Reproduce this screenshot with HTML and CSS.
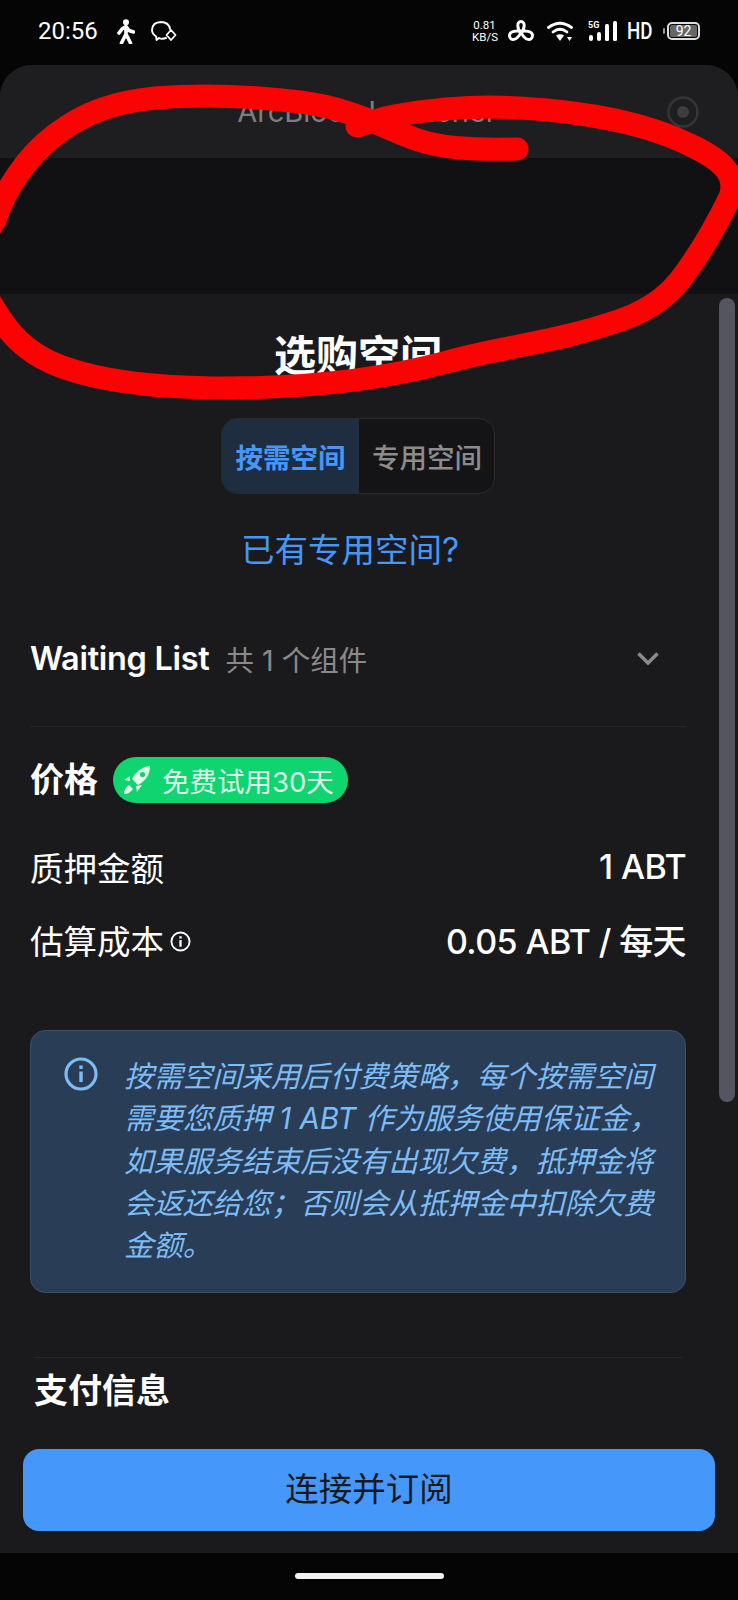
FILE: index.html
```html
<!DOCTYPE html>
<html lang="zh-CN">
<head>
<meta charset="utf-8">
<title>选购空间</title>
<link rel="stylesheet" href="styles.css">
</head>
<body>
<div class="screen">
  <header class="status">
    <div class="status-left">
      <span class="time">20:56</span>
      <svg class="ico-walk" viewBox="0 0 18 25"><circle cx="9" cy="3.2" r="3"/><path d="M9 7.500 L5 10 L2 14 M9 7.500 L12 11.500 L16.500 13 M9 8 V15 M9 15 L4.500 24 M9 15 L13.500 24" fill="none" stroke="#fff" stroke-width="3.600" stroke-linecap="round" stroke-linejoin="round"/></svg>
      <svg class="ico-chat" viewBox="0 0 26 21"><path d="M15 17 Q11 18.5 8 17 L5.5 19 L5.2 15.5 Q1 13 1 8.8 Q1.500 1.300 10 1 Q18 1.300 19 8" fill="none" stroke="#fff" stroke-width="1.900" stroke-linecap="round" stroke-linejoin="round"/><path d="M20 9 L24.500 14 L20 19 L15.500 14 Z" fill="none" stroke="#fff" stroke-width="1.800" stroke-linejoin="round"/></svg>
    </div>
    <div class="status-right">
      <span class="speed">0.81<br>KB/S</span>
      <svg class="ico-clover" viewBox="0 0 26 22"><path d="M13 12 C9 9 8.500 1.500 13 1.500 C17.500 1.500 17 9 13 12 C16 10 25 11 24.500 16 C24 21 17 21.500 13 12 C9 21.500 2 21 1.500 16 C1 11 10 10 13 12 Z" fill="none" stroke="#fff" stroke-width="2.900" stroke-linejoin="round"/></svg>
      <svg class="ico-wifi" viewBox="0 0 26 21"><g fill="none" stroke="#fff" stroke-width="2.800" stroke-linecap="round"><path d="M1.500 6.500 Q13 -2 24.500 6.500"/><path d="M6 11 Q13 5.500 20 11"/></g><path d="M9 14.500 Q13 12 17 14.500 L13 20 Z M20 16 h5 l-2.500 4 Z" fill="#fff"/></svg>
      <svg class="ico-signal" viewBox="0 0 28 20"><g fill="#fff"><rect x="0" y="14" width="4" height="6" rx="2"/><rect x="8" y="11" width="4" height="9" rx="2"/><rect x="16" y="3" width="4" height="17" rx="1.500"/><rect x="24" y="0" width="4" height="20" rx="1.500"/></g></svg>
      <span class="sig-label">5G</span>
      <span class="hd">HD</span>
      <span class="battery"><span class="battery-fill">92</span></span>
    </div>
  </header>

  <main class="sheet">
    <div class="app-head">
      <span></span>
      <span class="app-name">ArcBlock Launcher</span>
      <svg class="app-dot" viewBox="0 0 32 32"><circle cx="16" cy="16" r="14.500" fill="none" stroke="#353538" stroke-width="2.500"/><circle cx="16" cy="16" r="6" fill="#3d3d40"/></svg>
    </div>
    <div class="band"></div>

    <div class="scroll">
      <h1 class="title">选购空间</h1>
      <div class="tabs-wrap">
        <div class="tabs">
          <span class="tab tab-on">按需空间</span>
          <span class="tab">专用空间</span>
        </div>
      </div>
      <a class="link">已有专用空间?</a>

      <div class="list-row">
        <span class="list-name">Waiting List</span>
        <span class="list-count">共 1 个组件</span>
        <svg class="chev" viewBox="0 0 24 15"><path d="M2.500 2.500 L12 12 L21.500 2.500" fill="none" stroke="#8a8a8c" stroke-width="3.600"/></svg>
      </div>
      <div class="rule"></div>

      <div class="price-head">
        <span class="h2">价格</span>
        <span class="badge">
          <svg class="rocket" viewBox="0 0 28 30"><path d="M27 1 C19 2 13 6 9 14 L15 20 C23 16 27 9 27 1 Z" fill="#e4f8ec"/><circle cx="19.500" cy="9.500" r="2.600" fill="#10d46f"/><path d="M7 11 L1 15 L7 16 Z M19 20 L14 27 L13 21 Z M6 20 C3 22 1 25 1 29 C5 29 8 27 10 24 Z" fill="#e4f8ec"/></svg>
          免费试用30天
        </span>
      </div>
      <div class="kv kv-first">
        <span>质押金额</span>
        <span class="val">1 ABT</span>
      </div>
      <div class="kv kv-second">
        <span class="kv-label">估算成本
          <svg class="mini-info" viewBox="0 0 22 22"><circle cx="11" cy="11" r="9.500" fill="none" stroke="#fff" stroke-width="2"/><rect x="9.800" y="9.500" width="2.400" height="7" fill="#fff"/><rect x="9.800" y="5.500" width="2.400" height="2.400" fill="#fff"/></svg>
        </span>
        <span class="val">0.05 ABT / 每天</span>
      </div>

      <div class="notice">
        <svg class="notice-ico" viewBox="0 0 34 34"><circle cx="17" cy="17" r="15" fill="none" stroke="#7dbcf5" stroke-width="3.200"/><rect x="15.300" y="14.500" width="3.400" height="10.500" fill="#7dbcf5"/><rect x="15.300" y="8.500" width="3.400" height="3.400" fill="#7dbcf5"/></svg>
        <p class="notice-text">按需空间采用后付费策略，每个按需空间<br>需要您质押 1 ABT 作为服务使用保证金，<br>如果服务结束后没有出现欠费，抵押金将<br>会返还给您；否则会从抵押金中扣除欠费<br>金额。</p>
      </div>

      <div class="rule rule-pay"></div>
      <div class="h2 pay-title">支付信息</div>
    </div>

    <div class="foot">
      <button class="cta">连接并订阅</button>
    </div>
    <div class="thumb"></div>
  </main>

  <footer class="navbar"><span class="home"></span></footer>

  <svg class="scribble" viewBox="0 0 738 1600"><path d="M517 149 C470 150 440 148 415 139 C385 128 350 108 300 102 C250 96 200 94 155 98 C115 102 85 112 55 135 C25 158 5 190 -5 220 C-25 250 -25 280 -5 310 C10 335 25 350 50 362 C90 380 150 388 226 388 C300 388 380 380 447 362 C490 350 530 345 570 335 C620 322 655 312 680 280 C697 258 714 230 730 197 C738 175 722 160 690 145 C650 125 590 112 520 108 C470 105 420 110 385 118 L357 126" fill="none" stroke="#fc0303" stroke-width="23" stroke-linecap="round" stroke-linejoin="round"/></svg>
</div>
</body>
</html>
```

FILE: styles.css
```css
* { box-sizing: border-box; }
html, body { margin: 0; padding: 0; background: #050505; }
body { font-family: Inter, "Noto Sans CJK SC", sans-serif; color: #fff; }
.screen { position: relative; width: 738px; height: 1600px; display: flex; flex-direction: column; overflow: hidden; background: #050505; }

.status { height: 65px; flex: none; display: flex; justify-content: space-between; align-items: flex-start; padding: 0 38px; }
.status-left, .status-right { display: flex; align-items: center; height: 62px; }
.time { font: 400 24px/1 Roboto, sans-serif; width: 60px; white-space: nowrap; }
.ico-walk { width: 18px; height: 25px; margin-left: 19px; fill: #fff; }
.ico-chat { width: 26px; height: 21px; margin-left: 16px; }
.status-right { position: relative; }
.speed { font: 400 11.500px/12px Roboto, sans-serif; text-align: center; width: 25px; white-space: nowrap; }
.ico-clover { width: 26px; height: 22px; margin-left: 11px; }
.ico-wifi { width: 26px; height: 21px; margin-left: 13px; }
.ico-signal { width: 28px; height: 20px; margin-left: 16px; }
.sig-label { position: absolute; left: 116px; top: 21px; font: 700 9px/1 Roboto, sans-serif; }
.hd { font: 500 24px/1 Roboto, sans-serif; margin-left: 10px; width: 23px; transform: scaleX(0.78); transform-origin: left center; }
.battery { position: relative; width: 33px; height: 18px; margin-left: 17px; border: 2px solid #ddd; border-radius: 5px; padding: 1px; display: flex; }
.battery::before { content: ""; position: absolute; left: -6px; top: 4px; width: 2px; height: 6px; background: #999; border-radius: 1px; }
.battery-fill { flex: 1; background: #666; border-radius: 2px; font: 400 14px/12px Roboto, sans-serif; text-align: center; color: #fff; }

.sheet { position: relative; flex: 1; min-height: 0; display: flex; flex-direction: column; background: #1a1a1c; border-radius: 32px 32px 0 0; overflow: hidden; }
.app-head { height: 93px; flex: none; background: #1e1e20; display: grid; grid-template-columns: 1fr auto 1fr; align-items: center; }
.app-name { font-size: 29px; line-height: 34px; color: #7d7d7f; margin-left: -4px; white-space: nowrap; }
.app-dot { width: 32px; height: 32px; justify-self: end; margin-right: 39px; }
.band { height: 136px; flex: none; background: #111113; }

.scroll { flex: 1; min-height: 0; overflow: hidden; padding: 0 52px 0 30px; }
.title { margin: 37px 0 0; font-size: 42px; line-height: 50px; font-weight: 700; text-align: center; }
.tabs-wrap { display: flex; justify-content: center; margin-top: 37px; }
.tabs { display: flex; height: 76px; width: 274px; border: 1px solid #2b2b2e; border-radius: 16px; overflow: hidden; background: #141416; }
.tab { flex: none; width: 136px; display: flex; align-items: center; justify-content: center; font-size: 27.500px; font-weight: 500; color: #8c8c8c; white-space: nowrap; }
.tab-on { width: 137px; background: #1f2d40; color: #4598fa; font-weight: 700; }
.link { display: block; margin-top: 34px; padding-right: 16px; font-size: 33.500px; line-height: 44px; text-align: center; color: #4598fa; }

.list-row { display: flex; align-items: center; height: 44px; margin-top: 64px; }
.list-name { font-size: 32.500px; font-weight: 600; letter-spacing: -0.3px; white-space: nowrap; }
.list-count { margin-left: 16px; font-size: 28.500px; color: #8a8a8c; white-space: nowrap; }
.chev { width: 24px; height: 15px; margin-left: auto; margin-right: 26px; }
.rule { height: 1px; margin-top: 46px; background: #27272a; }

.price-head { display: flex; align-items: center; margin-top: 30px; height: 46px; }
.h2 { font-size: 34px; line-height: 44px; font-weight: 700; }
.badge { display: flex; align-items: center; height: 46px; width: 235px; margin-left: 15px; padding-left: 10px; border-radius: 23px; background: #10d46f; color: #dff7ea; font-size: 27.500px; white-space: nowrap; }
.rocket { width: 28px; height: 30px; margin-right: 11px; flex: none; }

.kv { display: flex; justify-content: space-between; align-items: center; height: 44px; font-size: 33.500px; }
.kv-first { margin-top: 41px; }
.kv-second { margin-top: 29px; }
.kv-label { display: flex; align-items: center; }
.val { font-size: 34px; font-weight: 500; letter-spacing: -0.6px; white-space: nowrap; }
.mini-info { width: 21px; height: 21px; margin-left: 6px; margin-top: 4px; }

.notice { display: flex; align-items: flex-start; height: 263px; margin-top: 69px; padding: 26px 0 0 33px; background: #293d57; border: 1px solid #3b5068; border-radius: 15px; }
.notice-ico { width: 34px; height: 34px; flex: none; }
.notice-text { margin: -1px 0 0 26px; font-size: 29.400px; line-height: 42.300px; font-style: italic; color: #7dbcf5; white-space: nowrap; }

.rule-pay { margin: 64px 4px 0 4px; }
.pay-title { margin: 11px 0 0 4px; }

.foot { flex: none; padding: 0 23px 22px; }
.cta { display: block; width: 692px; height: 82px; border: 0; border-radius: 16px; background: #4598fa; color: #1a1a1c; font: 400 33.500px/1 Inter, "Noto Sans CJK SC", sans-serif; }
.thumb { position: absolute; top: 233px; left: 719px; width: 16px; height: 804px; border-radius: 8px; background: #55555f; }

.navbar { height: 47px; flex: none; display: flex; justify-content: center; padding-top: 20px; background: #050505; }
.home { width: 149px; height: 6px; border-radius: 3px; background: #f2f2f2; }
.scribble { position: absolute; left: 0; top: 0; width: 738px; height: 1600px; pointer-events: none; }
```
